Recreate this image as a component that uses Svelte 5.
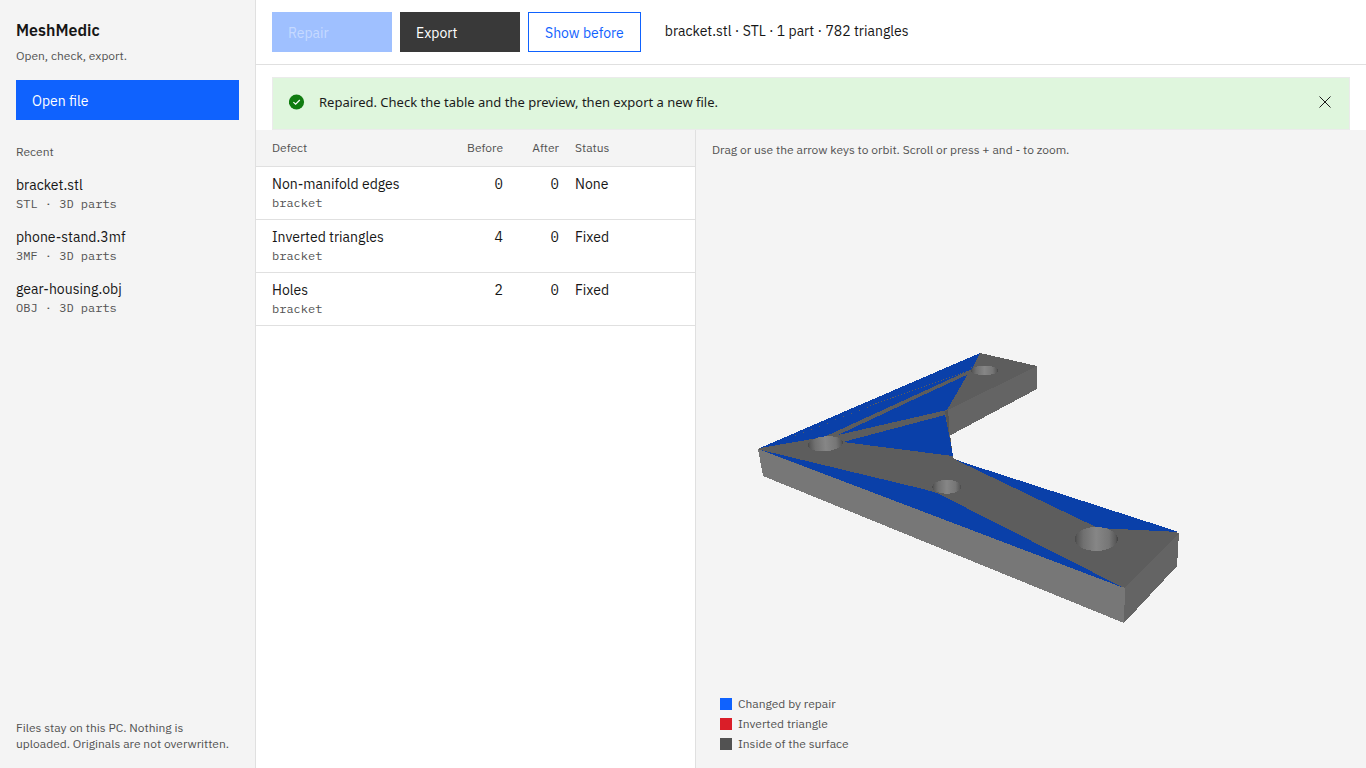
<script>
  const recent = [
    { name: 'bracket.stl', kind: 'STL · 3D parts' },
    { name: 'phone-stand.3mf', kind: '3MF · 3D parts' },
    { name: 'gear-housing.obj', kind: 'OBJ · 3D parts' }
  ];
  const defects = [
    { name: 'Non-manifold edges', part: 'bracket', before: 0, after: 0, status: 'None' },
    { name: 'Inverted triangles', part: 'bracket', before: 4, after: 0, status: 'Fixed' },
    { name: 'Holes', part: 'bracket', before: 2, after: 0, status: 'Fixed' }
  ];
  const legend = [
    { label: 'Changed by repair', color: '#0f62fe' },
    { label: 'Inverted triangle', color: '#da1e28' },
    { label: 'Inside of the surface', color: '#525252' }
  ];
  // Bore openings: centre, radii, tilt in degrees
  const holes = [
    { x: 825.5, y: 443.8, rx: 17.5, ry: 7.5, tilt: -5 },
    { x: 984.5, y: 370.4, rx: 13.5, ry: 4.8, tilt: 0 },
    { x: 946.8, y: 486.8, rx: 14.5, ry: 7, tilt: 0 },
    { x: 1096.3, y: 539, rx: 21.5, ry: 12, tilt: 0 }
  ];
  let notice = $state(true);
</script>

<div class="app">
  <aside>
    <h1>MeshMedic</h1>
    <p class="tagline">Open, check, export.</p>
    <button class="btn primary wide">Open file</button>
    <h2>Recent</h2>
    <ul class="recent">
      {#each recent as file}
        <li>
          <button class="file">
            <span class="name">{file.name}</span>
            <span class="mono">{file.kind}</span>
          </button>
        </li>
      {/each}
    </ul>
    <p class="privacy">Files stay on this PC. Nothing is uploaded. Originals are not overwritten.</p>
  </aside>

  <main>
    <header>
      <button class="btn primary" disabled>Repair</button>
      <button class="btn dark">Export</button>
      <button class="btn outline">Show before</button>
      <span class="summary">bracket.stl · STL · 1 part · 782 triangles</span>
    </header>

    {#if notice}
      <div class="notice" role="status">
        <svg width="16" height="16" viewBox="0 0 16 16" aria-hidden="true">
          <circle cx="7.5" cy="8" r="7.6" fill="#107c10" />
          <path d="M4.4 8.1 6.6 10.2 10.8 6" fill="none" stroke="#fff" stroke-width="1.2" />
        </svg>
        <span>Repaired. Check the table and the preview, then export a new file.</span>
        <button class="close" aria-label="Close" onclick={() => (notice = false)}>
          <svg width="12" height="12" viewBox="0 0 12 12" aria-hidden="true">
            <path d="M.5.5l11 11M11.5.5l-11 11" stroke="#1b1b1b" />
          </svg>
        </button>
      </div>
    {/if}

    <div class="panes">
      <section class="defects">
        <table>
          <thead>
            <tr><th>Defect</th><th class="num">Before</th><th class="num">After</th><th>Status</th></tr>
          </thead>
          <tbody>
            {#each defects as d}
              <tr>
                <td>{d.name}<span class="mono">{d.part}</span></td>
                <td class="num count">{d.before}</td>
                <td class="num count">{d.after}</td>
                <td>{d.status}</td>
              </tr>
            {/each}
          </tbody>
        </table>
      </section>

      <section class="viewer">
        <svg class="scene" viewBox="696 130 670 638" role="img" aria-label="Preview of bracket">
          <defs>
            <linearGradient id="bore">
              <stop offset="0" stop-color="#484848" />
              <stop offset=".06" stop-color="#5a5a5a" />
              <stop offset=".2" stop-color="#707070" />
              <stop offset=".5" stop-color="#868686" />
              <stop offset=".8" stop-color="#767676" />
              <stop offset=".95" stop-color="#5a5a5a" />
              <stop offset="1" stop-color="#444" />
            </linearGradient>
          </defs>
          <g shape-rendering="crispEdges">
            <path fill="#5d5d5d" d="M758 449 980 353 1037 366 946 411 950 434 953 458 962 462 1179 533 1125 589z" />
            <path fill="#777" d="M758 449 1125 588 1124 623 763 476z" />
            <path fill="#646464" d="M1125 588 1179 533 1177 566 1124 623z" />
            <path fill="#646464" d="M1037 366 1037 389 949 436 946 411z" />
            <path fill="#545454" d="M945 411 948 410 949 422 949 436z" />
            <g fill="#0a40a9">
              <path d="M760 448 980 353 970 370 824 437z" />
              <path d="M838 435 970 373 980 353 947 410z" />
              <path d="M843 442 945 415 949 434 953 456z" />
              <path d="M761 450 923 489 937 493 1124 588z" />
              <path d="M956 460 1179 532 1098 528z" />
            </g>
            <path d="M823 438 971 370 971 373 830 438z" fill="#5d5d5d" />
            <path d="M795 436 868 407" stroke="#5d5d5d" stroke-dasharray="1 7.6" />
            <path d="M870 406 968 371" stroke="#5d5d5d" stroke-dasharray="1 2" />
            {#each holes as h}
              <ellipse cx={h.x} cy={h.y} rx={h.rx} ry={h.ry} fill="url(#bore)" transform="rotate({h.tilt} {h.x} {h.y})" />
            {/each}
          </g>
        </svg>
        <p class="hint">Drag or use the arrow keys to orbit. Scroll or press + and - to zoom.</p>
        <ul class="legend">
          {#each legend as item}
            <li><i style="background: {item.color}"></i>{item.label}</li>
          {/each}
        </ul>
      </section>
    </div>
  </main>
</div>

<style>
  :global(body) { margin: 0; }
  .app {
    display: grid;
    grid-template-columns: 256px minmax(0, 1fr);
    min-height: 100vh;
    background: #fff;
    color: #161616;
    font: 14px/18px "IBM Plex Sans", Roboto, "Liberation Sans", sans-serif;
  }
  .app *, .app { box-sizing: border-box; }
  h1, h2, p, ul { margin: 0; padding: 0; }
  ul { list-style: none; }
  button { font: inherit; color: inherit; border: 0; border-radius: 0; background: none; text-align: left; cursor: pointer; }
  aside {
    display: flex;
    flex-direction: column;
    padding: 20px 16px 16px;
    background: #f4f4f4;
    border-right: 1px solid #e0e0e0;
  }
  h1 { font-size: 16px; line-height: 20px; font-weight: 600; }
  .tagline, .privacy, .hint, .legend, h2, th { font-size: 12px; line-height: 16px; color: #525252; font-weight: 400; }
  .tagline { margin: 8px 0 16px; }
  h2 { margin: 24px 0 16px; }
  .btn { height: 40px; width: 120px; padding: 2px 16px 0; }
  .primary { background: #0f62fe; color: #fff; }
  .primary:disabled { background: #9fc0ff; color: #c5d9ff; cursor: default; }
  .dark { background: #393939; color: #fff; }
  .outline { width: auto; border: 1px solid #0f62fe; color: #0f62fe; }
  .wide { width: 100%; }
  .recent { display: grid; gap: 14px; }
  .file { display: block; width: 100%; padding: 0; }
  .name { display: block; }
  .mono { display: block; font: 12px/20px "IBM Plex Mono", "Liberation Mono", monospace; color: #525252; }
  .privacy { margin-top: auto; }
  main { display: flex; flex-direction: column; min-width: 0; }
  header {
    display: flex;
    align-items: center;
    gap: 8px;
    padding: 12px 16px;
    border-bottom: 1px solid #e0e0e0;
  }
  .summary { margin-left: 16px; padding-bottom: 2px; }
  .notice {
    display: flex;
    align-items: center;
    min-height: 53px;
    margin: 12px 16px 0;
    padding: 0 18px 3px 16px;
    background: #dff6dd;
    border: 1px solid #ebebeb;
    color: #1b1b1b;
    font-family: "Noto Sans", "Open Sans", sans-serif;
    font-size: 13px;
  }
  .notice span { flex: 1; margin-left: 14px; }
  .close { display: flex; padding: 0; }
  .panes { flex: 1; display: grid; grid-template-columns: 440px minmax(0, 1fr); }
  .defects { border-right: 1px solid #e0e0e0; }
  table { width: 100%; border-collapse: collapse; table-layout: fixed; }
  th, td { padding: 8px 8px 6px; text-align: left; vertical-align: top; border-bottom: 1px solid #e0e0e0; }
  th { padding: 10px 8px; background: #f4f4f4; }
  th:first-child, td:first-child { padding-left: 16px; }
  th:nth-child(2) { width: 72px; }
  th:nth-child(3) { width: 56px; }
  th:nth-child(4) { width: 128px; }
  .num { text-align: right; }
  .count { font-family: "IBM Plex Mono", "Liberation Mono", monospace; }
  .viewer { position: relative; display: flex; flex-direction: column; justify-content: space-between; background: #f4f4f4; }
  .scene { position: absolute; inset: 0; width: 100%; height: 100%; }
  .hint { position: relative; padding: 12px 16px; }
  .legend { position: relative; display: grid; gap: 4px; padding: 0 24px 16px; }
  .legend li { display: flex; align-items: center; gap: 6px; }
  .legend i { width: 12px; height: 12px; }
</style>
